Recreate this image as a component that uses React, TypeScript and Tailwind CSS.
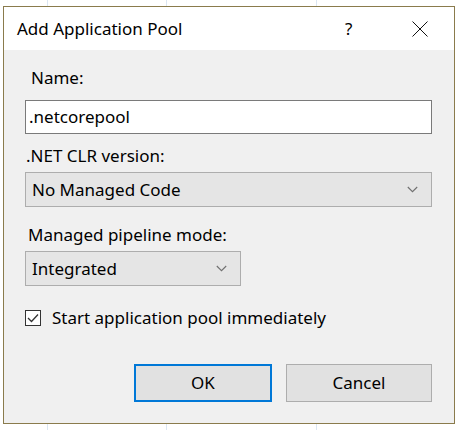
import React from 'react';

// ── Chevron for the combo boxes ─────────────────────────────────────────────
const Chevron = () => (
  <svg width="11" height="7" viewBox="0 0 11 7" className="shrink-0">
    <path d="M0.8 1 L5.5 5.7 L10.2 1" fill="none" stroke="#707070" strokeWidth="1.1" />
  </svg>
);

// ── Combo box (read-only look) ─────────────────────────────────────────────
const Combo: React.FC<{ value: string; width: string }> = ({ value, width }) => (
  <div
    className={`${width} h-[35px] flex items-center justify-between bg-[#e5e5e5] border border-[#adadad] pl-[6px] pr-[13px]`}
  >
    <span className="text-black text-[17px]">{value}</span>
    <Chevron />
  </div>
);

const Strip = () => (
  <div className="flex h-[6px] w-full">
    <div className="w-[47px]" />
    <div className="w-[119px] border-l border-[#dbe6f2]" />
    <div className="w-[150px] border-l border-[#dbe6f2]" />
    <div className="flex-1 border-l border-[#dbe6f2]" />
  </div>
);

export default function App() {
  return (
    <div
      className="w-[462px] h-[430px] bg-white flex flex-col overflow-hidden"
      style={{ fontFamily: '"Noto Sans", "Segoe UI", sans-serif' }}
    >
      <Strip />
      <div className="ml-[3px] w-[452px] h-[418px] border border-[#8a7b4c] flex flex-col">
        {/* title bar */}
        <div className="h-[43px] bg-white flex items-center pl-[13px] shrink-0">
          <span className="text-[17px] text-black flex-1">Add Application Pool</span>
          <span className="text-[17px] text-black w-[10px] mr-[57px]">?</span>
          <svg width="16" height="16" viewBox="0 0 16 16" className="mr-[26px]">
            <path d="M0.5 0.5 L15.5 15.5 M15.5 0.5 L0.5 15.5" stroke="#111" strokeWidth="1" />
          </svg>
        </div>

        {/* body */}
        <div className="flex-1 bg-[#f0f0f0] pl-[21px] pr-[22px] flex flex-col text-[17px] text-black">
          <div className="mt-[16px] ml-[6px] h-[23px] leading-[23px]">Name:</div>
          <div className="mt-[11px] h-[34px] bg-white border border-[#7a7a7a] flex items-center pl-[3px]">
            .netcorepool
          </div>
          <div className="mt-[10px] ml-[1px] h-[23px] leading-[23px]">.NET CLR version:</div>
          <div className="mt-[5px]">
            <Combo value="No Managed Code" width="w-full" />
          </div>
          <div className="mt-[16px] ml-[3px] h-[23px] leading-[23px]">Managed pipeline mode:</div>
          <div className="mt-[5px]">
            <Combo value="Integrated" width="w-[216px]" />
          </div>
          <div className="mt-[23px] flex items-center h-[18px]">
            <div className="w-[16px] h-[16px] border border-[#333] bg-white flex items-center justify-center">
              <svg width="12" height="10" viewBox="0 0 12 10">
                <path d="M1 5 L4.5 8.5 L11 1.5" fill="none" stroke="#333" strokeWidth="1.3" />
              </svg>
            </div>
            <span className="ml-[11px]">Start application pool immediately</span>
          </div>
          <div className="mt-[37px] flex justify-end gap-[14px]">
            <button className="w-[138px] h-[38px] bg-[#e1e1e1] border-2 border-[#0078d7] text-[17px]">
              OK
            </button>
            <button className="w-[146px] h-[38px] bg-[#e1e1e1] border border-[#adadad] text-[17px]">
              Cancel
            </button>
          </div>
        </div>
      </div>
      <Strip />
    </div>
  );
}
